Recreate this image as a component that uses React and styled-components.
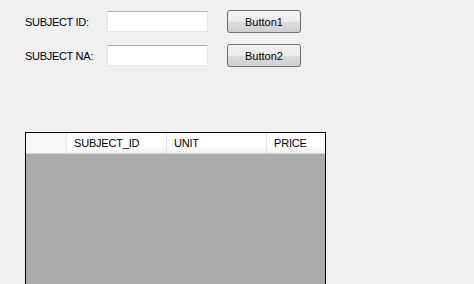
import styled, { createGlobalStyle } from "styled-components";

const GlobalStyle = createGlobalStyle`
	body {
		margin: 0;
		background: #f0f0f0;
		font-family: "Liberation Sans", Arial, sans-serif;
		font-size: 11px;
		color: #000;
		overflow: hidden;
	}
`;

const Form = styled.div`
	padding: 10px 0 0 25px;
	display: flex;
	flex-direction: column;
	gap: 11px;
`;

const Row = styled.div`
	display: flex;
	align-items: center;
	height: 23px;
`;

const Label = styled.span`
	width: 82px;
	letter-spacing: -0.3px;
`;

const TextBox = styled.input`
	box-sizing: border-box;
	width: 101px;
	height: 21px;
	margin: 0 19px 0 0;
	padding: 0;
	background: #fff;
	border: 1px solid #e3e9ef;
	border-top-color: #abadb3;
	border-left-color: #e2e3ea;
	outline: none;
`;

const Button = styled.button`
	box-sizing: border-box;
	width: 74px;
	height: 23px;
	padding: 0;
	border: 1px solid #707070;
	border-radius: 3px;
	background: linear-gradient(#f2f2f2 0%, #ebebeb 50%, #dddddd 51%, #cfcfcf 100%);
	font: inherit;
	color: #000;
`;

const Grid = styled.div`
	box-sizing: border-box;
	width: 301px;
	height: 153px;
	margin: 65px 0 0 25px;
	border: 1px solid #000;
	border-bottom: none;
	background: #ababab;
`;

const Header = styled.div`
	display: grid;
	grid-template-columns: 41px 100px 100px 1fr;
	height: 20px;
	border-bottom: 1px solid #d5d5d5;
	background: linear-gradient(#ffffff 0%, #ffffff 60%, #f1f2f4 100%);
`;

const Cell = styled.div`
	display: flex;
	align-items: center;
	padding-left: 7px;
	border-right: ${(p) => (p.$last ? "none" : "1px solid #e3e6ea")};
	background: ${(p) => (p.$corner ? "#f4f7fa" : "transparent")};
	white-space: nowrap;
	letter-spacing: -0.2px;
`;

export default function App() {
	return (
		<>
			<GlobalStyle />
			<Form>
				<Row>
					<Label>SUBJECT ID:</Label>
					<TextBox />
					<Button>Button1</Button>
				</Row>
				<Row>
					<Label>SUBJECT NA:</Label>
					<TextBox />
					<Button>Button2</Button>
				</Row>
			</Form>
			<Grid>
				<Header>
					<Cell $corner />
					<Cell>SUBJECT_ID</Cell>
					<Cell>UNIT</Cell>
					<Cell $last>PRICE</Cell>
				</Header>
			</Grid>
		</>
	);
}
